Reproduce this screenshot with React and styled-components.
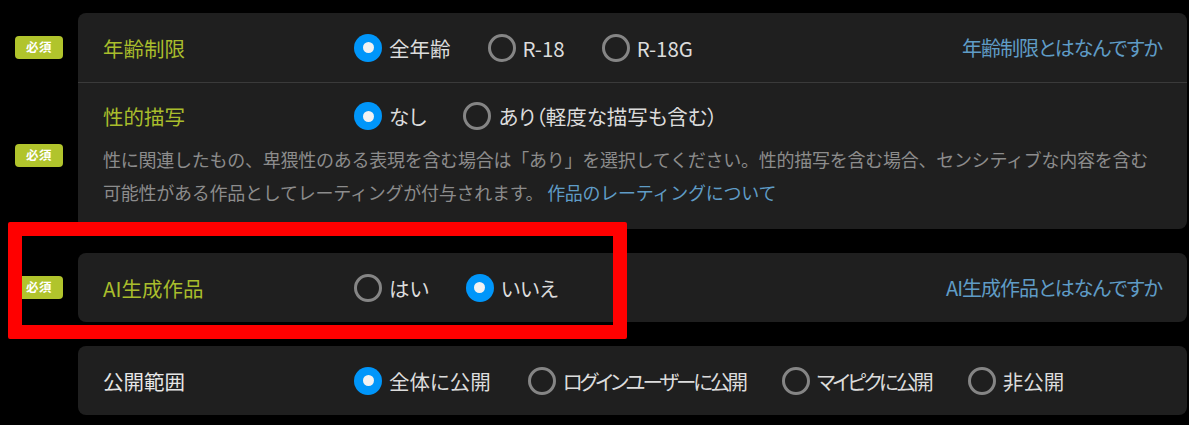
import React from "react";
import styled, { createGlobalStyle, css } from "styled-components";

const Global = createGlobalStyle`
  html, body { margin: 0; padding: 0; background: #000; }
  body {
    font-family: "Noto Sans CJK JP", "Noto Sans", sans-serif;
    color: #d8d8d8;
  }
`;

const Page = styled.div`
  position: relative;
  width: 1189px;
  height: 425px;
  padding-top: 13px;
  box-sizing: border-box;
  overflow: hidden;
  background: #000;
`;

const Group = styled.section`
  display: flex;
  flex-direction: column;
  margin-bottom: 24px;
`;

const Row = styled.div`
  display: grid;
  grid-template-columns: 78px 1109px;
  align-items: stretch;
`;

const BadgeCell = styled.div`
  display: flex;
  align-items: center;
  padding-left: 15px;
`;

const Badge = styled.span`
  display: inline-flex;
  align-items: center;
  justify-content: center;
  width: 48px;
  height: 23px;
  border-radius: 4px;
  background: #b1c42c;
  color: #fff;
  font-size: 12.5px;
  font-weight: 700;
  line-height: 1;
  letter-spacing: 0.5px;
`;

const Body = styled.div`
  background: #1f1f1f;
  padding: ${(p) => (p.$tall ? "18px 25px 20px 25px" : "0 25px")};
  min-height: ${(p) => (p.$tall ? "auto" : "69px")};
  box-sizing: border-box;
  display: flex;
  flex-direction: column;
  justify-content: center;
  ${(p) => p.$first && css`border-top-left-radius: 8px; border-top-right-radius: 8px;`}
  ${(p) => p.$last && css`border-bottom-left-radius: 8px; border-bottom-right-radius: 8px;`}
  ${(p) => !p.$first && css`border-top: 1px solid #3a3a3a;`}
`;

const Line = styled.div`
  display: flex;
  align-items: center;
  height: 30px;
`;

const Label = styled.div`
  width: 251px;
  flex: none;
  font-size: 20.5px;
  line-height: 30px;
  color: ${(p) => (p.$required ? "#a9bd2c" : "#e6e6e6")};
  font-feature-settings: "palt";
`;

const Options = styled.div`
  display: flex;
  align-items: center;
  flex: 1;
`;

const Option = styled.label`
  display: inline-flex;
  align-items: center;
  gap: 7px;
  margin-right: 37px;
  font-size: 20.5px;
  line-height: 30px;
  color: #dcdcdc;
  font-feature-settings: "palt";
  letter-spacing: ${(p) => (p.$tight ? "-3px" : "0")};
  white-space: nowrap;
  cursor: pointer;
`;

const Circle = styled.span`
  width: 28px;
  height: 28px;
  border-radius: 50%;
  box-sizing: border-box;
  flex: none;
  position: relative;
  ${(p) =>
    p.$checked
      ? css`
          background: #0096fa;
          &::after {
            content: "";
            position: absolute;
            left: 50%;
            top: 50%;
            width: 11px;
            height: 11px;
            margin: -5.5px 0 0 -5.5px;
            border-radius: 50%;
            background: #f2f2f2;
          }
        `
      : css`
          border: 3px solid #858585;
        `}
`;

const HelpLink = styled.a`
  margin-left: auto;
  font-size: 20px;
  line-height: 30px;
  color: #5f9cc6;
  text-decoration: none;
  font-feature-settings: "palt";
  letter-spacing: -1px;
  white-space: nowrap;
`;

const Description = styled.p`
  margin: 12px 0 0;
  font-size: 18px;
  line-height: 33px;
  letter-spacing: -0.25px;
  color: #8c8c8c;
`;

const InlineLink = styled.a`
  color: #5f9cc6;
  text-decoration: none;
`;

const Highlight = styled.div`
  position: absolute;
  left: 8px;
  top: 222px;
  width: 619px;
  height: 117px;
  box-sizing: border-box;
  border: 14px solid #ff0000;
  border-radius: 2px;
  pointer-events: none;
`;

function Radio({ checked, tight, children }) {
  return (
    <Option $tight={tight}>
      <Circle $checked={checked} />
      {children}
    </Option>
  );
}

export default function App() {
  return (
    <>
      <Global />
      <Page>
        <Group>
          <Row>
            <BadgeCell>
              <Badge>必須</Badge>
            </BadgeCell>
            <Body $first>
              <Line>
                <Label $required>年齢制限</Label>
                <Options>
                  <Radio checked>全年齢</Radio>
                  <Radio>R-18</Radio>
                  <Radio>R-18G</Radio>
                  <HelpLink href="#">年齢制限とはなんですか</HelpLink>
                </Options>
              </Line>
            </Body>
          </Row>
          <Row>
            <BadgeCell>
              <Badge>必須</Badge>
            </BadgeCell>
            <Body $last $tall>
              <Line>
                <Label $required>性的描写</Label>
                <Options>
                  <Radio checked>なし</Radio>
                  <Radio>あり（軽度な描写も含む）</Radio>
                </Options>
              </Line>
              <Description>
                性に関連したもの、卑猥性のある表現を含む場合は「あり」を選択してください。性的描写を含む場合、センシティブな内容を含む可能性がある作品としてレーティングが付与されます。{" "}
                <InlineLink href="#">作品のレーティングについて</InlineLink>
              </Description>
            </Body>
          </Row>
        </Group>

        <Group>
          <Row>
            <BadgeCell>
              <Badge>必須</Badge>
            </BadgeCell>
            <Body $first $last>
              <Line>
                <Label $required>AI生成作品</Label>
                <Options>
                  <Radio>はい</Radio>
                  <Radio checked>いいえ</Radio>
                  <HelpLink href="#">AI生成作品とはなんですか</HelpLink>
                </Options>
              </Line>
            </Body>
          </Row>
        </Group>

        <Group>
          <Row>
            <BadgeCell />
            <Body $first $last>
              <Line>
                <Label>公開範囲</Label>
                <Options>
                  <Radio checked>全体に公開</Radio>
                  <Radio tight>ログインユーザーに公開</Radio>
                  <Radio tight>マイピクに公開</Radio>
                  <Radio>非公開</Radio>
                </Options>
              </Line>
            </Body>
          </Row>
        </Group>

        <Highlight />
      </Page>
    </>
  );
}
